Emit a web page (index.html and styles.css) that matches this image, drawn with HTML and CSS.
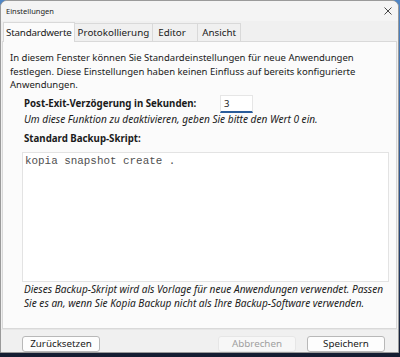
FILE: index.html
```html
<!DOCTYPE html>
<html lang="de">
<head>
<meta charset="utf-8">
<title>Einstellungen</title>
<link rel="stylesheet" href="styles.css">
</head>
<body>
<div class="window">
  <div class="titlebar">
    <span class="title">Einstellungen</span>
    <svg class="close" width="10" height="10" viewBox="0 0 10 10"><path d="M1.5 1.5L8.5 8.5M8.5 1.5L1.5 8.5" stroke="#333" stroke-width="0.9" fill="none"/></svg>
  </div>
  <div class="tabs">
    <div class="tab active">Standardwerte</div>
    <div class="tab tab-log">Protokollierung</div>
    <div class="tab tab-editor">Editor</div>
    <div class="tab">Ansicht</div>
  </div>
  <div class="panel">
    <p class="intro">In diesem Fenster können Sie Standardeinstellungen für neue Anwendungen festlegen. Diese Einstellungen haben keinen Einfluss auf bereits konfigurierte Anwendungen.</p>
    <div class="field">
      <div class="row">
        <label class="label">Post-Exit-Verzögerung in Sekunden:</label>
        <div class="input">3</div>
      </div>
      <div class="hint">Um diese Funktion zu deaktivieren, geben Sie bitte den Wert 0 ein.</div>
      <div class="label label-script">Standard Backup-Skript:</div>
    </div>
    <div class="textarea">kopia snapshot create .</div>
    <div class="note">Dieses Backup-Skript wird als Vorlage für neue Anwendungen verwendet. Passen Sie es an, wenn Sie Kopia Backup nicht als Ihre Backup-Software verwenden.</div>
  </div>
  <div class="buttons">
    <button class="btn">Zurücksetzen</button>
    <div class="spacer"></div>
    <button class="btn disabled">Abbrechen</button>
    <button class="btn">Speichern</button>
  </div>
</div>
</body>
</html>
```
FILE: styles.css
```css
html, body {
  margin: 0;
  padding: 0;
}
body {
  width: 400px;
  height: 357px;
  background: linear-gradient(180deg, #4f86c6 0%, #2b4f86 60%, #141c30 100%);
  font-family: "Noto Sans", "Open Sans", sans-serif;
  font-size: 9.5px;
  color: #1a1a1a;
  overflow: hidden;
}
.window {
  width: 399px;
  height: 353px;
  background: #f0f0f0;
  border: 1px solid #9a9a9a;
  border-radius: 7px 7px 0 0;
  box-sizing: border-box;
  display: flex;
  flex-direction: column;
  overflow: hidden;
}
.titlebar {
  height: 20px;
  background: #f4f4f4;
  display: flex;
  align-items: center;
  justify-content: space-between;
  padding: 0 5px 0 5px;
  flex-shrink: 0;
}
.title {
  font-size: 7.5px;
  color: #222;
}
.close {
  display: block;
}
.tabs {
  height: 20px;
  display: flex;
  align-items: flex-end;
  padding-left: 2px;
  flex-shrink: 0;
  position: relative;
  z-index: 1;
}
.tab {
  height: 18px;
  line-height: 18px;
  padding: 0 4px;
  font-size: 9.8px;
  border: 1px solid #d9d9d9;
  border-bottom: none;
  border-left: none;
  background: #f0f0f0;
  color: #1a1a1a;
  box-sizing: border-box;
}
.tab:first-of-type {
  border-left: 1px solid #d9d9d9;
}
.tab.active {
  background: #fbfbfb;
  height: 20px;
  line-height: 19px;
  padding: 0 2px;
  margin-bottom: -1px;
  letter-spacing: -0.2px;
}
.tab-log {
  padding: 0 3px;
}
.tab-editor {
  min-width: 45px;
  padding-left: 5px;
}
.panel {
  background: #fbfbfb;
  border: 1px solid #d9d9d9;
  margin: 0 1px;
  height: 288px;
  box-sizing: border-box;
  padding: 9px 7px 0 7px;
  flex-shrink: 0;
}
.intro {
  margin: 0;
  line-height: 13.5px;
}
.field {
  padding-left: 14px;
}
.row {
  display: flex;
  align-items: center;
  margin-top: 3px;
}
.label {
  font-weight: bold;
  width: 196px;
  font-size: 9.7px;
}
.input {
  width: 33px;
  height: 18px;
  box-sizing: border-box;
  background: #fff;
  border: 1px solid #e6e6e6;
  border-bottom: 2px solid #2a5c9a;
  padding: 1px 3px;
  line-height: 14px;
}
.hint {
  font-style: italic;
  font-size: 10.1px;
  margin-top: -1px;
}
.label-script {
  margin-top: 6px;
  width: auto;
}
.textarea {
  margin: 7px 0 0 12px;
  height: 130px;
  background: #fff;
  border: 1px solid #e3e3e3;
  box-sizing: border-box;
  font-family: "Liberation Mono", monospace;
  font-size: 10.9px;
  color: #505050;
  padding: 2px 2px;
}
.note {
  font-style: italic;
  font-size: 10.1px;
  line-height: 14px;
  margin: 0 0 0 14px;
}
.buttons {
  flex: 1;
  display: flex;
  align-items: center;
  padding: 6px 13px 0 21px;
  gap: 11px;
  border-top: 1px solid #e6e6e6;
}
.spacer {
  flex: 1;
}
.btn {
  font-family: inherit;
  font-size: 9.8px;
  height: 16px;
  width: 78px;
  padding: 0;
  line-height: 14px;
  background: #fdfdfd;
  border: 1px solid #b8b8b8;
  border-radius: 3px;
  color: #1a1a1a;
}
.btn.disabled {
  color: #a0a0a0;
  border-color: #e6e6e6;
  background: #f7f7f7;
}
```
